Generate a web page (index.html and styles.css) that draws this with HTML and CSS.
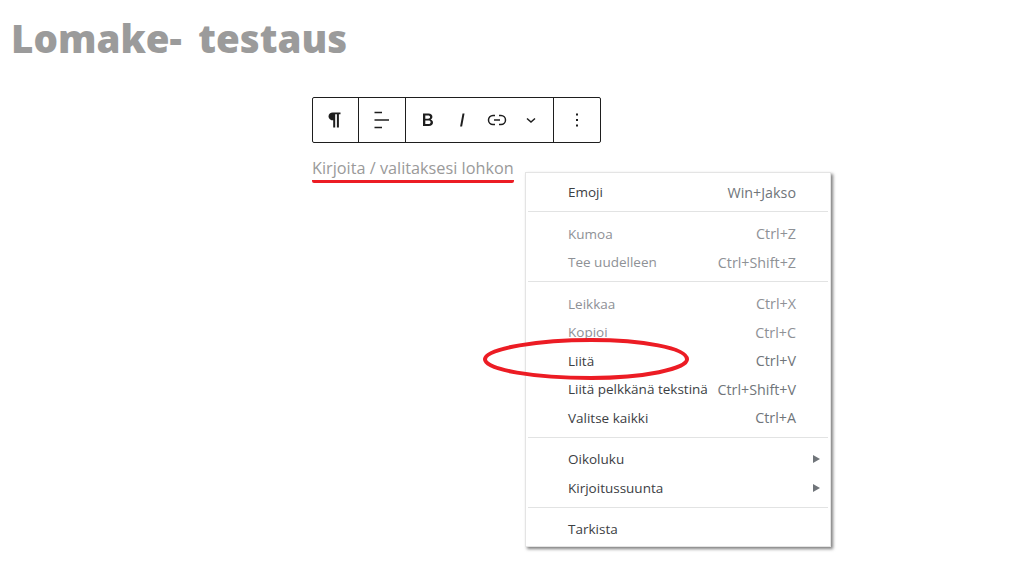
FILE: index.html
```html
<!DOCTYPE html>
<html lang="fi">
<head>
<meta charset="utf-8">
<title>Lomake- testaus</title>
<link rel="stylesheet" href="styles.css">
</head>
<body>
<h1 class="title">Lomake- testaus</h1>
<main class="editor">
  <div class="toolbar">
    <div class="group group-one"><svg width="24" height="24" viewBox="0 0 24 24"><path fill="#1e1e1e" d="M8.600 4.500h7.900v1.800h-1.600v13.200h-2V6.300h-1.700v13.200h-2v-7.200c-2.500 0-4.700-1.500-4.700-3.900s2.100-3.900 4.100-3.900z"/></svg></div>
    <div class="group group-two"><svg width="24" height="24" viewBox="0 0 24 24"><path stroke="#1e1e1e" stroke-width="1.500" fill="none" d="M4.500 4.500H12M4.500 12H19M4.500 19.500H12"/></svg></div>
    <div class="group group-three">
      <svg width="24" height="24" viewBox="0 0 24 24"><path fill="#1e1e1e" fill-rule="evenodd" d="M7 5.500h5.500c2.500 0 3.900 1.300 3.900 3.200 0 1.300-.7 2.300-1.800 2.800 1.500.4 2.400 1.600 2.400 3.100 0 2.200-1.600 3.500-4.200 3.500H7zm2.300 2v3.200h2.800c1.200 0 2-.6 2-1.600s-.7-1.600-2-1.600zm0 5v3.500h3.200c1.300 0 2.100-.6 2.100-1.800s-.8-1.700-2.200-1.700z"/></svg>
      <svg width="24" height="24" viewBox="0 0 24 24"><path fill="#1e1e1e" d="M12.500 5.500h2l-2.400 13h-2z"/></svg>
      <svg width="24" height="24" viewBox="0 0 24 24"><path stroke="#1e1e1e" stroke-width="1.500" fill="none" d="M10 7.500H8a4.500 4.500 0 0 0 0 9h2M14 7.500h2a4.500 4.500 0 0 1 0 9h-2M9 12h6"/></svg>
      <svg width="24" height="24" viewBox="0 0 24 24"><path stroke="#1e1e1e" stroke-width="1.500" fill="none" d="M8 10.500l4 3.500 4-3.500"/></svg>
    </div>
    <div class="group group-four"><svg width="24" height="24" viewBox="0 0 24 24"><path fill="#1e1e1e" d="M11 5.500h2v2h-2zM11 11h2v2h-2zM11 16.500h2v2h-2z"/></svg></div>
  </div>
  <p class="placeholder">Kirjoita / valitaksesi lohkon</p>
</main>
<ul class="menu">
  <li class="row"><span>Emoji</span><span class="key">Win+Jakso</span></li>
  <li class="sep"></li>
  <li class="row off"><span>Kumoa</span><span class="key">Ctrl+Z</span></li>
  <li class="row off"><span>Tee uudelleen</span><span class="key">Ctrl+Shift+Z</span></li>
  <li class="sep"></li>
  <li class="row off"><span>Leikkaa</span><span class="key">Ctrl+X</span></li>
  <li class="row off"><span>Kopioi</span><span class="key">Ctrl+C</span></li>
  <li class="row"><span>Liitä</span><span class="key">Ctrl+V</span></li>
  <li class="row"><span>Liitä pelkkänä tekstinä</span><span class="key">Ctrl+Shift+V</span></li>
  <li class="row"><span>Valitse kaikki</span><span class="key">Ctrl+A</span></li>
  <li class="sep"></li>
  <li class="row sub"><span>Oikoluku</span></li>
  <li class="row sub"><span>Kirjoitussuunta</span></li>
  <li class="sep"></li>
  <li class="row"><span>Tarkista</span></li>
</ul>
<svg class="ring" width="212" height="46" viewBox="0 0 212 46"><path fill="none" stroke="#ec1c24" stroke-width="4" d="M4 23C5 12 60 4 110 4c52 0 95 8 96 19 1 10-44 19-96 19C55 42 3 34 4 23z"/></svg>
</body>
</html>
```
FILE: styles.css
```css
* { box-sizing: border-box; }
html, body { margin: 0; height: 100%; overflow: hidden; }
body { background: #fff; font-family: "Open Sans", "Liberation Sans", sans-serif; position: relative; }
.title {
  margin: 0;
  padding: 13px 0 0 11px;
  height: 97px;
  font-family: "Open Sans", "Liberation Sans", sans-serif;
  font-size: 38.500px;
  line-height: 50px;
  font-weight: 800;
  color: #9b9b9b;
  word-spacing: 6.500px;
}
.editor { margin-left: 312px; width: 202px; }
.toolbar {
  display: flex;
  width: 289px;
  height: 46px;
  border: 1px solid #1e1e1e;
  border-radius: 2px;
}
.group { display: flex; align-items: center; justify-content: center; border-right: 1px solid #1e1e1e; }
.group:last-child { border-right: 0; }
.group-one { width: 46px; }
.group-two { width: 47px; }
.group-three { width: 148px; justify-content: space-between; padding: 0 10px; }
.group-four { flex: 1; }
.placeholder {
  margin: 14px 0 0;
  height: 26px;
  font-size: 16.250px;
  line-height: 22px;
  color: #9a9a9a;
  white-space: nowrap;
  border-bottom: 3px solid #ec1c24;
  border-radius: 0 0 2px 2px;
}
.menu {
  position: absolute;
  left: 525px;
  top: 172px;
  width: 306px;
  height: 375px;
  margin: 0;
  padding: 5px 1px 0;
  list-style: none;
  background: #fff;
  border: 1px solid #e4e4e4;
  box-shadow: 2px 2px 3px rgba(0, 0, 0, .5);
  font-family: "Open Sans", "Liberation Sans", sans-serif;
  font-size: 13.500px;
  color: #3c4043;
}
.row {
  display: flex;
  justify-content: space-between;
  align-items: center;
  height: 28.500px;
  padding: 0 33px 0 41px;
  white-space: nowrap;
}
.key { color: #70757a; font-size: 14.300px; }
.off, .off .key { color: #8e9196; }
.sep { height: 1px; background: #e2e3e3; margin: 4.500px 1px 7.500px; }
.sub { position: relative; }
.sub::after {
  content: "";
  position: absolute;
  right: 9px;
  top: 10px;
  border-left: 7px solid #70757a;
  border-top: 4.500px solid transparent;
  border-bottom: 4.500px solid transparent;
}
.ring { position: absolute; left: 481px; top: 336px; }
```
